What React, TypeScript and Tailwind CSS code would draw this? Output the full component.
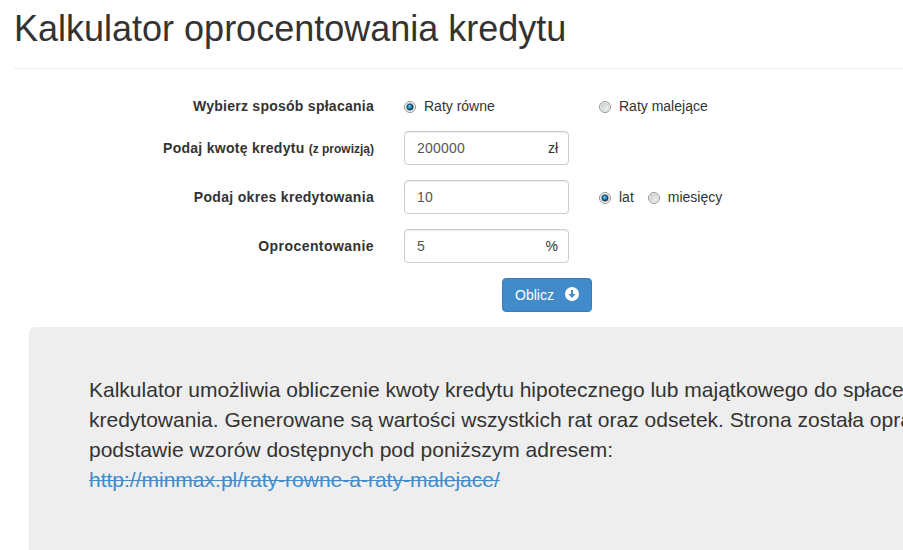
import type { ReactNode } from 'react';

function Radio({ checked = false, children }: { checked?: boolean; children: ReactNode }) {
  return (
    <label className="flex items-center whitespace-nowrap">
      <svg className="mt-0.5 mr-2 h-3 w-3" viewBox="0 0 12 12">
        <defs>
          <linearGradient id="face" x1="0" y1="0" x2="1" y2="1">
            <stop offset="0" stopColor="#c8ccd0" />
            <stop offset="1" stopColor="#f8f8f8" />
          </linearGradient>
          <radialGradient id="dot" cx="0.42" cy="0.4" r="0.65">
            <stop offset="0" stopColor="#6fcdf2" />
            <stop offset="0.5" stopColor="#1e82b8" />
            <stop offset="1" stopColor="#0a2c48" />
          </radialGradient>
        </defs>
        <circle cx="6" cy="6" r="5.5" fill="#f8f8f8" stroke="#939595" />
        <circle cx="6" cy="6" r="3.9" fill="url(#face)" stroke="#c4c6c8" strokeWidth="0.6" />
        {checked && <circle cx="6" cy="6" r="3.1" fill="url(#dot)" stroke="#17384f" strokeWidth="0.8" />}
      </svg>
      {children}
    </label>
  );
}

function Row({ label, children }: { label: ReactNode; children: ReactNode }) {
  return (
    <div className="mb-[15px] flex h-[34px] items-center">
      <div className="mr-[30px] w-[374px] text-right font-bold whitespace-nowrap">{label}</div>
      {children}
    </div>
  );
}

function Field({ value, unit }: { value: string; unit?: string }) {
  return (
    <div className="flex h-[34px] w-[165px] items-center justify-between rounded border border-[#cccccc] bg-white px-3 shadow-[inset_0_1px_1px_rgba(0,0,0,0.075)]">
      <span className="tracking-[0.2px] text-[#555555]">{value}</span>
      {unit && <span className="-mr-0.5">{unit}</span>}
    </div>
  );
}

export default function App() {
  return (
    <div className="h-[550px] w-full overflow-hidden bg-white font-['Liberation_Sans',Arial,sans-serif] text-sm leading-5 text-[#333333]">
      <header className="ml-3.5 border-b border-[#eeeeee] pt-[9px] pb-5">
        <h1 className="text-4xl leading-[39px] font-normal whitespace-nowrap">Kalkulator oprocentowania kredytu</h1>
      </header>
      <form>
        <div className="mt-[27px] mb-[15px] flex h-5 items-center">
          <div className="mr-[30px] w-[374px] text-right font-bold tracking-[0.26px] whitespace-nowrap">Wybierz sposób spłacania</div>
          <div className="w-[195px]"><Radio checked>Raty równe</Radio></div>
          <Radio>Raty malejące</Radio>
        </div>
        <Row label={<><span className="tracking-[0.28px]">Podaj kwotę kredytu </span><span className="text-xs">(z prowizją)</span></>}>
          <Field value="200000" unit="zł" />
        </Row>
        <Row label={<span className="tracking-[0.31px]">Podaj okres kredytowania</span>}>
          <Field value="10" />
          <div className="ml-[30px] flex gap-3.5">
            <Radio checked>lat</Radio>
            <Radio>miesięcy</Radio>
          </div>
        </Row>
        <Row label={<span className="tracking-[0.43px]">Oprocentowanie</span>}>
          <Field value="5" unit="%" />
        </Row>
        <button type="button" className="ml-[502px] flex h-[34px] w-[90px] items-center justify-between rounded border border-[#357ebd] bg-[#428bca] px-3 text-white">
          <span>Oblicz</span>
          <svg className="-mt-0.5 h-3.5 w-3.5" viewBox="0 0 14 14">
            <circle cx="7" cy="7" r="7" fill="#ffffff" />
            <path d="M6 3h2v4h2.500L7 11 3.500 7H6z" fill="#428bca" />
          </svg>
        </button>
      </form>
      <section className="mt-[15px] ml-[29px] h-[300px] rounded-tl-md bg-[#eeeeee] pt-12 pl-[60px] text-[21px] leading-[30px] whitespace-nowrap">
        <p>Kalkulator umożliwia obliczenie kwoty kredytu hipotecznego lub majątkowego do spłacenia</p>
        <p>kredytowania. Generowane są wartości wszystkich rat oraz odsetek. Strona została opracowana</p>
        <p>podstawie wzorów dostępnych pod poniższym adresem:</p>
        <a className="text-[#428bca] line-through decoration-1">http://minmax.pl/raty-rowne-a-raty-malejace/</a>
      </section>
    </div>
  );
}
